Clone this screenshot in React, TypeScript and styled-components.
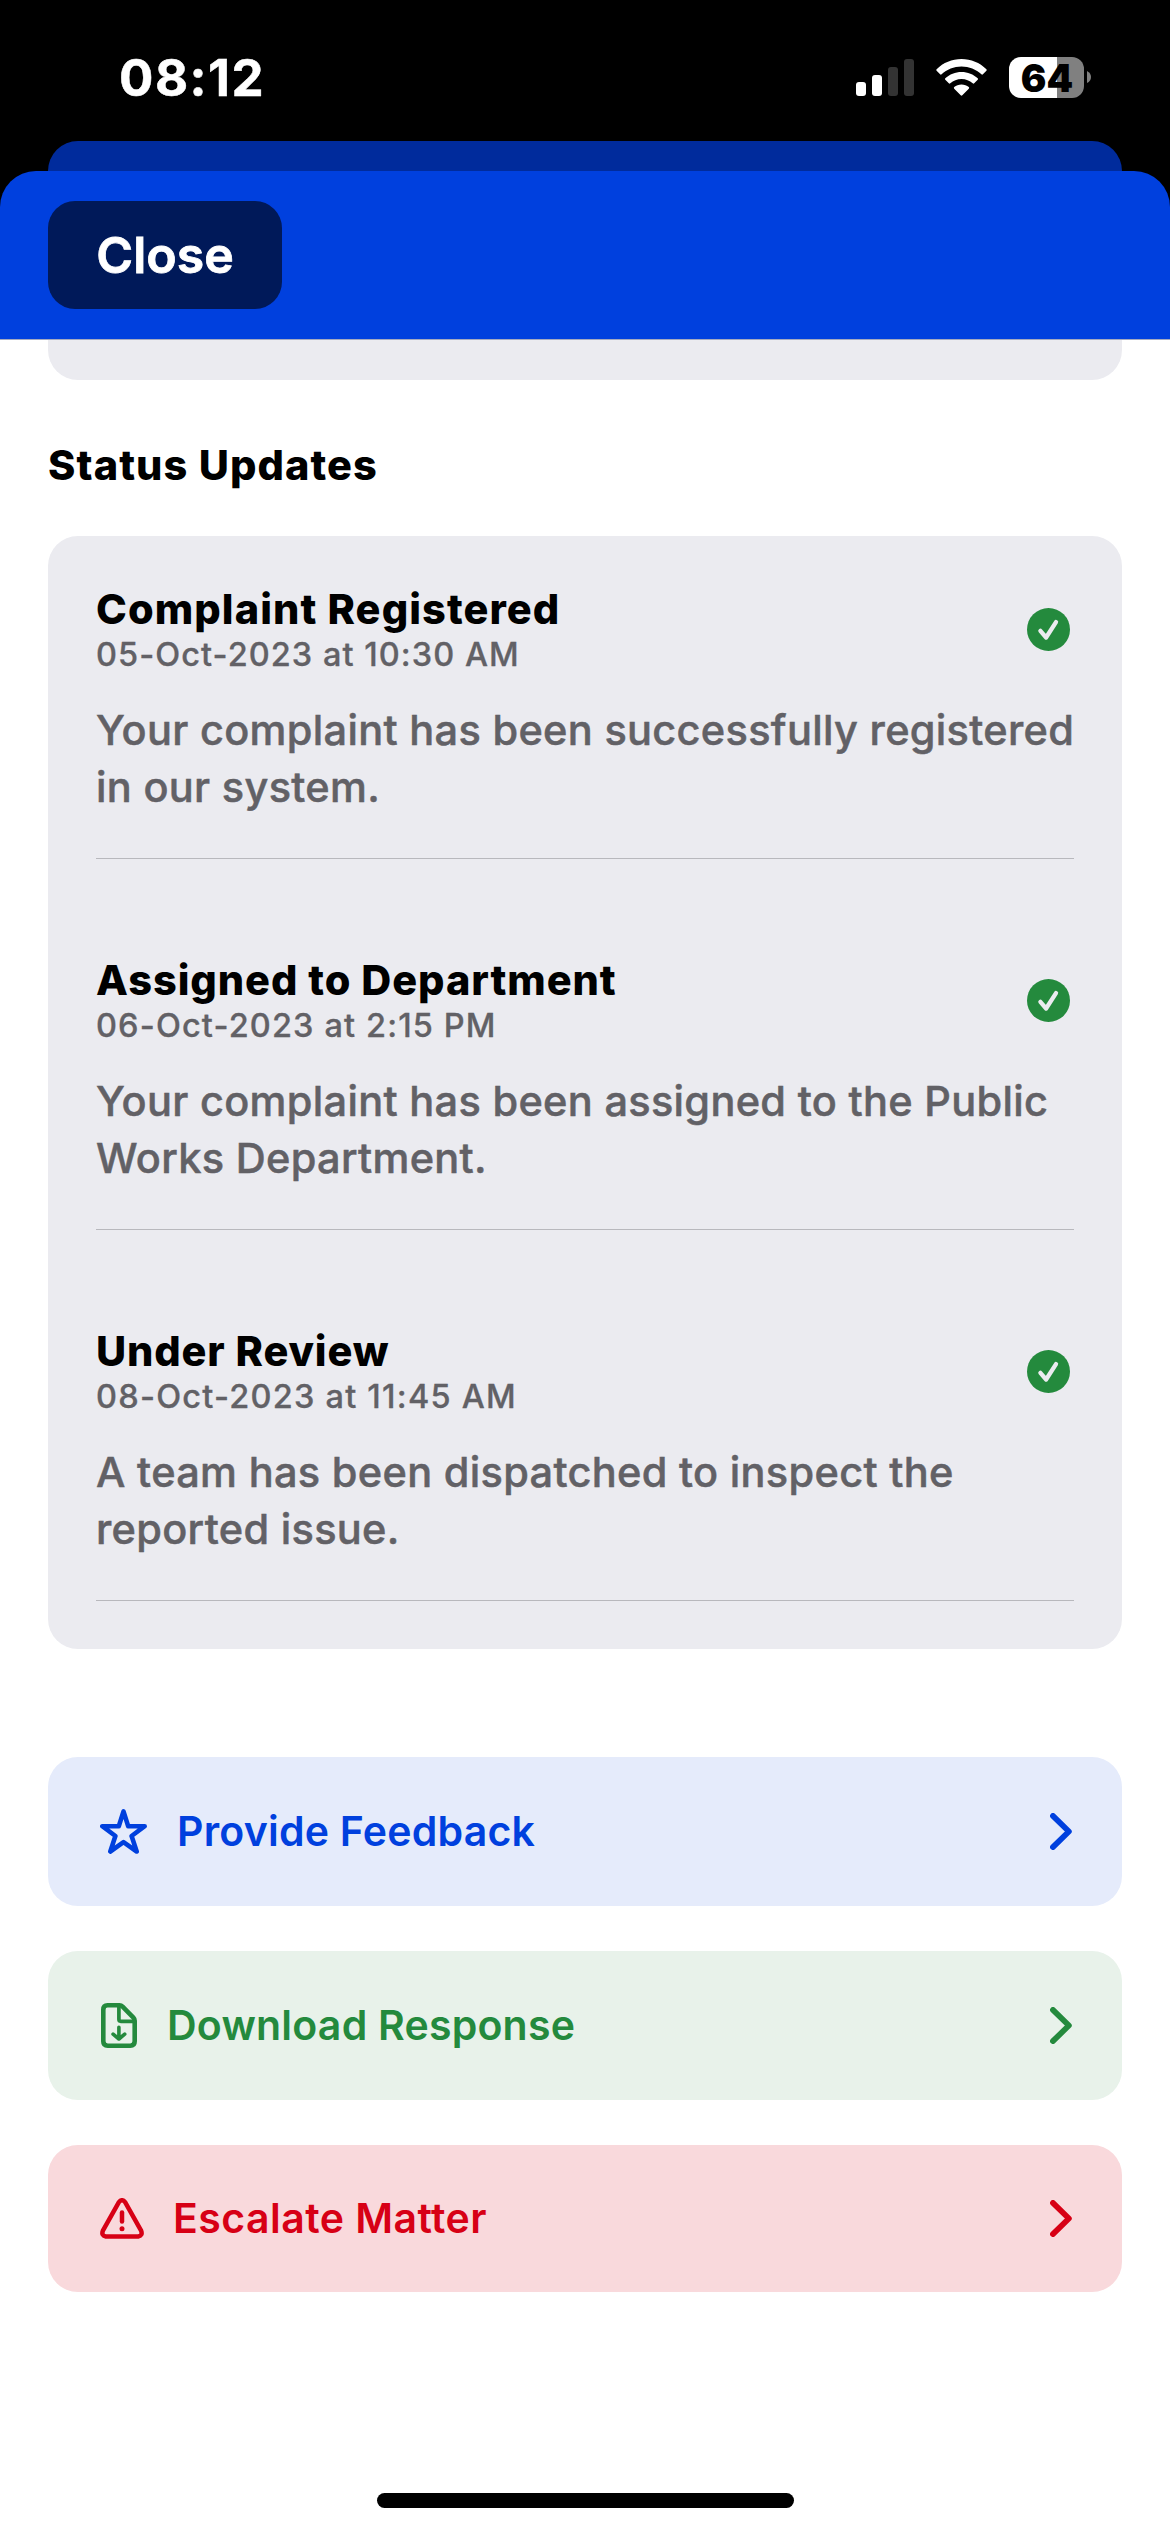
import React from "react";
import styled, { createGlobalStyle } from "styled-components";

const GlobalStyle = createGlobalStyle`
  *, *::before, *::after { box-sizing: border-box; }
  html, body { margin: 0; padding: 0; background: #fff; }
  body { font-family: Inter, "Liberation Sans", sans-serif; }
`;

const Screen = styled.div`
  width: 1170px;
  height: 2532px;
  overflow: hidden;
  display: flex;
  flex-direction: column;
  background: #fff;
`;

const Backdrop = styled.div`
  background: #000;
  height: 339px;
  display: flex;
  flex-direction: column;
  flex: none;
`;

const StatusBar = styled.div`
  height: 141px;
  display: flex;
  justify-content: space-between;
  padding: 0 79px 0 119px;
`;

const Clock = styled.div`
  font-size: 51px;
  line-height: 60px;
  font-weight: 700;
  letter-spacing: 1.5px;
  -webkit-text-stroke: 0.5px currentColor;
  color: #fff;
  margin-top: 48px;
`;

const StatusIcons = styled.div`
  display: flex;
  margin-top: 57px;
`;

const SignalIcon = styled.svg`
  width: 58px;
  height: 41px;
  margin-right: 22px;
`;

const WifiIcon = styled.svg`
  width: 51px;
  height: 41px;
  margin-right: 22px;
`;

const Battery = styled.div`
  width: 75px;
  height: 41px;
  border-radius: 12px;
  background: linear-gradient(to right, #fff 48px, #808080 48px);
  color: #000;
  font-size: 38px;
  line-height: 42px;
  font-weight: 900;
  padding-left: 1px;
  text-align: center;
`;

const BatteryNub = styled.svg`
  width: 4px;
  height: 12px;
  margin: 14px 0 0 3px;
`;

const PreviousSheet = styled.div`
  height: 30px;
  margin: 0 48px;
  border-radius: 30px 30px 0 0;
  background: #002b9c;
`;

const SheetHeader = styled.header`
  flex: 1;
  border-radius: 36px 36px 0 0;
  background: #0040de;
  padding: 30px 48px;
  display: flex;
`;

const CloseButton = styled.button`
  width: 234px;
  height: 108px;
  border: 0;
  border-radius: 27px;
  background: #001959;
  color: #fff;
  font: 600 50px/108px Inter, "Liberation Sans", sans-serif;
  -webkit-text-stroke: 0.8px currentColor;
  padding: 0;
`;

const Content = styled.main`
  border-top: 1px solid #a5aac0;
  padding: 0 48px;
  display: flex;
  flex-direction: column;
  flex: 1;
`;

const ScrolledCard = styled.div`
  height: 40px;
  border-radius: 0 0 30px 30px;
  background: #ebebf0;
`;

const SectionTitle = styled.h2`
  margin: 60px 0 0;
  height: 96px;
  font-size: 41.5px;
  line-height: 50px;
  font-weight: 800;
  letter-spacing: 1.1px;
  color: #000;
`;

const UpdatesCard = styled.section`
  border-radius: 30px;
  background: #ebebf0;
  padding: 0 48px;
  height: 1113px;
`;

const UpdateRow = styled.article`
  height: 371px;
  padding-top: 48px;
`;

const UpdateHead = styled.div`
  display: flex;
  justify-content: space-between;
  align-items: center;
  height: 90px;
  padding-right: 4px;
`;

const UpdateTitle = styled.h3<{ $spacing: number }>`
  margin: 0;
  font-size: 41.5px;
  line-height: 50px;
  font-weight: 800;
  letter-spacing: ${(p) => p.$spacing}px;
  color: #000;
`;

const UpdateDate = styled.div<{ $spacing: number }>`
  font-size: 32.5px;
  line-height: 40px;
  padding-top: 1px;
  height: 40px;
  font-weight: 500;
  letter-spacing: ${(p) => p.$spacing}px;
  -webkit-text-stroke: 0.3px currentColor;
  color: #626166;
`;

const UpdateText = styled.p`
  margin: 28px 0 0;
  padding-bottom: 41px;
  height: 157px;
  border-bottom: 1px solid #b8b8bd;
  font-size: 41.5px;
  line-height: 57px;
  font-weight: 500;
  letter-spacing: 0.31px;
  -webkit-text-stroke: 0.5px currentColor;
  color: #626166;
  white-space: nowrap;
`;

const CheckBadge = styled.svg`
  width: 43px;
  height: 43px;
  flex: none;
`;

const Actions = styled.div`
  margin-top: 108px;
  display: flex;
  flex-direction: column;
  gap: 45px;
`;

const Action = styled.button<{ $tint: string; $fill: string; $gap: number; $height: number }>`
  height: ${(p) => p.$height}px;
  border: 0;
  border-radius: 30px;
  padding: 0 50px 0 52px;
  display: flex;
  align-items: center;
  gap: ${(p) => p.$gap}px;
  background: ${(p) => p.$fill};
  color: ${(p) => p.$tint};
  text-align: left;
`;

const ActionLabel = styled.span<{ $spacing: number }>`
  flex: 1;
  padding-bottom: 2px;
  font: 600 41px/50px Inter, "Liberation Sans", sans-serif;
  letter-spacing: ${(p) => p.$spacing}px;
`;

const ActionIcon = styled.svg`
  flex: none;
  display: block;
  fill: none;
  stroke: currentColor;
  stroke-linecap: round;
  stroke-linejoin: round;
`;

const HomeIndicator = styled.div`
  width: 417px;
  height: 15px;
  margin: auto auto 24px;
  border-radius: 8px;
  background: #000;
`;

const Signal = () => (
  <SignalIcon viewBox="0 0 58 41">
    <rect x="0" y="25" width="10" height="14" rx="3" fill="#fff" />
    <rect x="16" y="18" width="10" height="21" rx="3" fill="#fff" />
    <rect x="32" y="10" width="10" height="29" rx="3" fill="#333" />
    <rect x="48" y="2" width="10" height="37" rx="3" fill="#333" />
  </SignalIcon>
);

const Wifi = () => (
  <WifiIcon viewBox="0 0 51 41" fill="#fff">
    <path d="M.6 12.2C7.3 5.7 16 2 25.5 2s18.2 3.7 24.9 10.2c.5.5.5 1.1 0 1.6l-3.5 3.5c-.5.5-1 .5-1.5 0C40.1 12.4 33.1 9.5 25.5 9.5S10.9 12.4 5.6 17.3c-.5.5-1 .5-1.5 0L.6 13.8c-.5-.5-.5-1.1 0-1.6z" />
    <path d="M9.3 21.2C13.6 17.2 19.3 14.9 25.5 14.9s11.9 2.3 16.2 6.3c.5.5.5 1.1 0 1.6l-3.5 3.5c-.5.5-1 .5-1.5 0-3-2.7-6.9-4.3-11.2-4.3s-8.2 1.6-11.2 4.3c-.5.5-1 .5-1.5 0l-3.5-3.5c-.5-.5-.5-1.1 0-1.6z" />
    <path d="M18.2 30.1c2-1.7 4.5-2.7 7.3-2.7s5.3 1 7.3 2.7c.5.5.5 1.1 0 1.6l-6.5 6.6c-.5.5-1.1.5-1.6 0l-6.500-6.600c-.5-.5-.5-1.100 0-1.600z" />
  </WifiIcon>
);

const Check = () => (
  <CheckBadge viewBox="0 0 43 43">
    <circle cx="21.5" cy="21.5" r="21.5" fill="#248a3d" />
    <path d="M13.4 22.9 19.1 29.5 29 14.1" fill="none" stroke="#ebebf0" strokeWidth="4.3" strokeLinecap="round" strokeLinejoin="round" />
  </CheckBadge>
);

const Star = () => (
  <ActionIcon width="47" height="45" viewBox="0 0 47 45" strokeWidth="4.6">
    <path d="M23.5 2.4 28.2 17.2H44.7L31.6 27 36.7 42.5 23.5 33.2 10.3 42.5 15.4 27 2.3 17.2H18.8Z" />
  </ActionIcon>
);

const DownloadDocument = () => (
  <ActionIcon width="37" height="45" viewBox="-1 0 37 45" strokeWidth="4.6">
    <path d="M6.5 2.3H18.5Q20.3 2.3 21.6 3.6L32.4 14.6Q33.7 15.9 33.7 17.8V38.3Q33.7 42.7 29.3 42.7H6.7Q2.3 42.7 2.3 38.3V6.7Q2.3 2.3 6.5 2.3Z" />
    <path strokeWidth="3.7" d="M17.9 3.5V16.3Q17.9 18.3 19.9 18.3H32.5" />
    <path strokeWidth="3.6" d="M17.9 24.2V36M12.1 31.2 17.9 36 23.7 31.2" />
  </ActionIcon>
);

const Warning = () => (
  <ActionIcon width="44" height="41" viewBox="0 0 44 41" strokeWidth="4.5">
    <path d="M18.9 4.1Q22 .3 25.1 4.1L41.1 32.7Q43 37.5 38.2 38.5H5.8Q1 37.5 2.9 32.7Z" />
    <path d="M22 14.4V23.6" />
    <circle cx="22" cy="30.7" r="2.5" fill="currentColor" stroke="none" />
  </ActionIcon>
);

const Chevron = () => (
  <ActionIcon width="22" height="37" viewBox="0 0 22 37" strokeWidth="5.7">
    <path d="M2.9 2.9 18.9 18.5 2.9 34.1" />
  </ActionIcon>
);

const updates = [
  {
    title: "Complaint Registered",
    titleSpacing: 1.08,
    date: "05-Oct-2023 at 10:30 AM",
    dateSpacing: 1.05,
    lines: ["Your complaint has been successfully registered", "in our system."],
  },
  {
    title: "Assigned to Department",
    titleSpacing: 0.93,
    date: "06-Oct-2023 at 2:15 PM",
    dateSpacing: 1.14,
    lines: ["Your complaint has been assigned to the Public", "Works Department."],
  },
  {
    title: "Under Review",
    titleSpacing: 0.85,
    date: "08-Oct-2023 at 11:45 AM",
    dateSpacing: 1.23,
    lines: ["A team has been dispatched to inspect the", "reported issue."],
  },
];

const actions = [
  { label: "Provide Feedback", Icon: Star, tint: "#0040de", fill: "#e5ebfb", gap: 30, height: 149, spacing: 0.22 },
  { label: "Download Response", Icon: DownloadDocument, tint: "#248a3d", fill: "#e8f2ea", gap: 30, height: 149, spacing: 0.22 },
  { label: "Escalate Matter", Icon: Warning, tint: "#d70015", fill: "#f9d9dc", gap: 29, height: 147, spacing: 0.45 },
];

export default function App() {
  return (
    <Screen>
      <GlobalStyle />
      <Backdrop>
        <StatusBar>
          <Clock>08:12</Clock>
          <StatusIcons>
            <Signal />
            <Wifi />
            <Battery>64</Battery>
            <BatteryNub viewBox="0 0 4 12">
              <path d="M0 0Q4 2 4 6T0 12Z" fill="#808080" />
            </BatteryNub>
          </StatusIcons>
        </StatusBar>
        <PreviousSheet />
        <SheetHeader>
          <CloseButton>Close</CloseButton>
        </SheetHeader>
      </Backdrop>
      <Content>
        <ScrolledCard />
        <SectionTitle>Status Updates</SectionTitle>
        <UpdatesCard>
          {updates.map((u) => (
            <UpdateRow key={u.title}>
              <UpdateHead>
                <div>
                  <UpdateTitle $spacing={u.titleSpacing}>{u.title}</UpdateTitle>
                  <UpdateDate $spacing={u.dateSpacing}>{u.date}</UpdateDate>
                </div>
                <Check />
              </UpdateHead>
              <UpdateText>
                {u.lines[0]}
                <br />
                {u.lines[1]}
              </UpdateText>
            </UpdateRow>
          ))}
        </UpdatesCard>
        <Actions>
          {actions.map(({ label, Icon, tint, fill, gap, height, spacing }) => (
            <Action key={label} $tint={tint} $fill={fill} $gap={gap} $height={height}>
              <Icon />
              <ActionLabel $spacing={spacing}>{label}</ActionLabel>
              <Chevron />
            </Action>
          ))}
        </Actions>
        <HomeIndicator />
      </Content>
    </Screen>
  );
}
